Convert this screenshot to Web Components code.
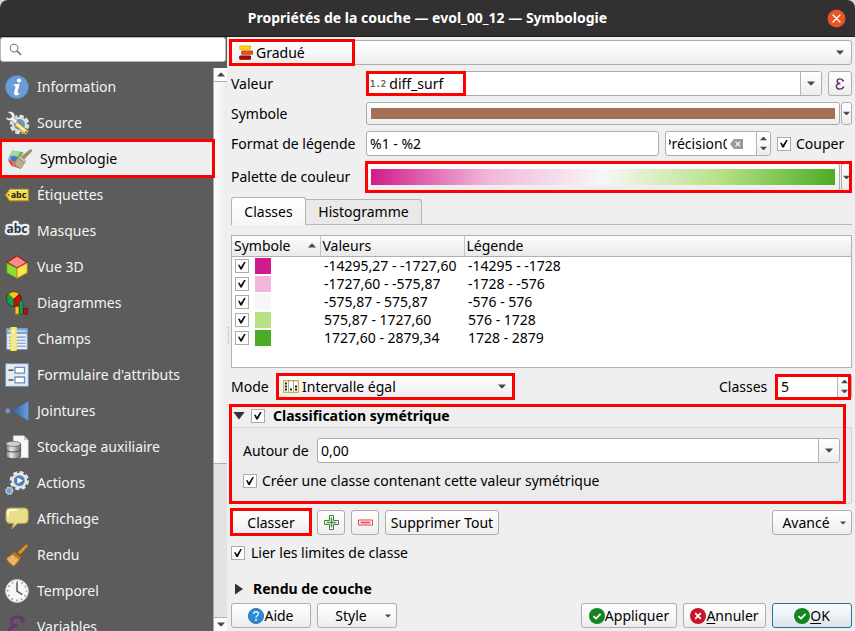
<!DOCTYPE html>
<html lang="fr">
<head>
<meta charset="utf-8">
<title>Propriétés de la couche — evol_00_12 — Symbologie</title>
<style>
  html, body { margin: 0; height: 100%; }
  body { background: #d6d6d6; font: 14px/18px "Noto Sans", "Open Sans", sans-serif; color: #000; overflow: hidden; }
</style>
</head>
<body>
<layer-dialog></layer-dialog>
<script>
const BASE = `
  *, *::before, *::after { box-sizing: border-box; }
  button, input, select { font: inherit; color: inherit; margin: 0; }
  button { cursor: pointer; }
`;
const BTN = 'linear-gradient(#fefefe, #f8f8f8 45%, #ececec)';

const ICONS = {
  search: `<svg viewBox="0 0 14 14"><circle cx="5.5" cy="5.5" r="4.2" fill="none" stroke="#777" stroke-width="1.1"/><path d="M8.8 8.8L12.6 12.4" stroke="#777" stroke-width="1.8" stroke-linecap="round"/></svg>`,
  arrow: `<svg viewBox="0 0 8 5"><path d="M0 .5H8L4.6 4.2H3.4Z" fill="#4a4a4a"/></svg>`,
  arrowUp: `<svg viewBox="0 0 8 5"><path d="M0 4.5H8L4.6 .8H3.4Z" fill="#4a4a4a"/></svg>`,
  close: `<svg viewBox="0 0 19 19"><circle cx="9.5" cy="9.5" r="9" fill="#ea5424"/><path d="M6 6L13 13M13 6L6 13" stroke="#fff" stroke-width="1.4" stroke-linecap="round"/></svg>`,
  info: `<svg viewBox="0 0 24 24"><circle cx="12" cy="12" r="11.6" fill="#6d9bd3" stroke="#4d7fbf" stroke-width=".8"/><circle cx="14" cy="5.6" r="2.1" fill="#fff"/><path d="M8.7 9.4L14.6 8.8L12.6 17.2Q12.3 18.9 15.1 17.4Q13.6 20.5 10.9 20.4Q8.5 20.2 9.2 17.3L10.5 11.6Q10.6 10.5 8.5 10.7Z" fill="#fff"/></svg>`,
  source: `<svg viewBox="0 0 24 24"><circle cx="14.5" cy="13.5" r="8.2" fill="none" stroke="#e4e6e4" stroke-width="3.2" stroke-dasharray="4.2 2.2"/><circle cx="14.5" cy="13.5" r="6.6" fill="#6795cb" stroke="#d8dcdc" stroke-width="2.4"/><path d="M2 1.5Q7-1 9.5 3Q10.3 5 9.5 7L14 11.4L11.2 14L7 9.6Q2.4 10.5.5 7L2 6.5L5 7.5L7 5.5L5.5 2.8Z" fill="#f3f3ef" stroke="#666" stroke-width=".6"/><path d="M12 10.7L23.7 20.2L20.8 23.8L9.6 14.2Z" fill="#f0dc73" stroke="#8e7a28" stroke-width=".8"/><path d="M11.5 12.5L21.5 21" stroke="#fff7ba" stroke-width="1.2"/><circle cx="21" cy="21.2" r="1.1" fill="#8a7431"/></svg>`,
  symbology: `<svg viewBox="0 0 26 22"><path d="M4.5 1.5L13 3L10 8.6L1.8 7Z" fill="#a8d69b"/><path d="M13 3L17 4L13 10L10 8.6Z" fill="#6fb35c"/><path d="M1.8 7L11 8.6L8 13.8L0 12Z" fill="#78a8dc"/><path d="M4 7.5L11 8.6L8 13.8L3 12.6Z" fill="#4479b8"/><path d="M0 12L9 14L11 20.5L4 18.5Z" fill="#c9403c"/><path d="M3 12.6L11 14L8 19.6L5 18.6Z" fill="#e26f6b"/><path d="M24.2.6Q26.3.8 25.4 3L17.6 11L14.6 8.6Z" fill="#a09268" stroke="#7d704b" stroke-width=".6"/><path d="M12.8 7.6L19.6 13.3L18 15.3L10.9 9.6Z" fill="#cfcab4" stroke="#877d5e" stroke-width=".5"/><path d="M10.9 9.6L18 15.3L13.5 21.5Q8.5 20.5 7 16Z" fill="#b9a987" stroke="#7b6d4b" stroke-width=".6"/><path d="M9 15L14 20M11 12.4L16 17.8" stroke="#d8cba9" stroke-width=".6"/></svg>`,
  labels: `<svg viewBox="0 0 24 24"><path d="M.6 12L4.6 6.2H23.3V17.8H4.6Z" fill="#f7d940" stroke="#b8951b" stroke-width="1"/><path d="M5 7.4H22.3" stroke="#fff2a0"/><circle cx="3.6" cy="12" r="1" fill="#8a7010"/><text x="13.6" y="15.2" font-family="Noto Sans, sans-serif" font-size="9" font-weight="700" text-anchor="middle" fill="#222">abc</text></svg>`,
  masks: `<svg viewBox="0 0 24 24"><text x="12" y="14" font-family="Noto Sans, sans-serif" font-size="12" font-weight="700" text-anchor="middle" fill="#33373c" stroke="#e8eefb" stroke-width="4.6" stroke-linejoin="round" paint-order="stroke">abc</text></svg>`,
  cube: `<svg viewBox="0 0 24 26"><path d="M12 .8L23 8L12 14L1 8Z" fill="#f58b8b" stroke="#b5121b" stroke-width="1.3"/><path d="M1 8.6L12 14.6V25.2L1 19.2Z" fill="#8fdc35" stroke="#5b9c17"/><path d="M23 8.6L12 14.6V25.2L23 19.2Z" fill="#fbe44e" stroke="#b99a12"/></svg>`,
  diagrams: `<svg viewBox="0 0 24 26"><circle cx="8.6" cy="8.8" r="8" fill="#12a04b" stroke="#17482c"/><path d="M8.6 8.8L2.6 3.4A8 8 0 0 1 14.6 3.4Z" fill="#f7c518" stroke="#7a5a08" stroke-width=".7"/><path d="M8.6 8.8L14.6 3.4A8 8 0 0 1 9 16.8Z" fill="#c80d12" stroke="#5a090b" stroke-width=".7"/><path d="M10.2 17.2H14V25H10.2Z" fill="#f9cb1d" stroke="#a87f0a" stroke-width=".8"/><path d="M14.8 10.6H18.4V25H14.8Z" fill="#15a454" stroke="#0a5c2c" stroke-width=".8"/><path d="M19.2 18.8H23.3V25H19.2Z" fill="#c41015" stroke="#660708" stroke-width=".8"/></svg>`,
  fields: `<svg viewBox="0 0 24 26"><path d="M.8 1.6H23.2V24.4H.8Z" fill="#e9eef3" stroke="#7198c5"/><path d="M.8 1.6H23.2V7.6H.8Z" fill="#7ba4d2"/><path d="M2 4.4H22" stroke="#bcd4ee" stroke-width="2"/><path d="M3 11H21.5M3 14.3H21.5M3 17.6H21.5M3 20.9H21.5" stroke="#7198c5" stroke-width="1.2"/><path d="M5.6.8H11V25.3H5.6Z" fill="#efe7a8" stroke="#f5ee3c" stroke-width="1.4"/><circle cx="8.3" cy="5" r="1.2" fill="#fff"/></svg>`,
  form: `<svg viewBox="0 0 24 24"><path d="M.6.6H23.4V23.4H.6Z" fill="#e8eaec" stroke="#6d96c6"/><path d="M10 4.4H19.5V10.2H10ZM10 14H19.5V19.8H10Z" fill="#fff" stroke="#6492c9" stroke-width="1.3"/><path d="M3.5 7.3H8.4M3.5 16.9H8.4" stroke="#44546a" stroke-width="1.5"/></svg>`,
  joins: `<svg viewBox="0 0 26 24"><defs><linearGradient id="j"><stop offset="0" stop-color="#2d5f9c"/><stop offset="1" stop-color="#6c9fd8"/></linearGradient></defs><circle cx="3" cy="12" r="2.7" fill="#6c9ace"/><path d="M8 12L25.4 1.2V22.8Z" fill="url(#j)" stroke="#3f70ad" stroke-width=".6"/></svg>`,
  storage: `<svg viewBox="0 0 26 26"><defs><linearGradient id="s"><stop offset="0" stop-color="#707070"/><stop offset=".35" stop-color="#e8e8e8"/><stop offset="1" stop-color="#6a6a6a"/></linearGradient></defs><path d="M9 .8H20.6L25.2 5.6V24.6H9Z" fill="#fafafa" stroke="#c4c4c4" stroke-width=".6"/><path d="M20.6.8V5.6H25.2Z" fill="#c6c6c6"/><path d="M1 9.6V22.8A8 2.8 0 0 0 17 22.8V9.6Z" fill="url(#s)" stroke="#444" stroke-width=".7"/><ellipse cx="9" cy="9.6" rx="8" ry="2.8" fill="#cfcfcf" stroke="#555" stroke-width=".7"/><path d="M1 15.6A8 2.8 0 0 0 17 15.6" fill="none" stroke="#3d3d3d"/></svg>`,
  actions: `<svg viewBox="0 0 26 26"><circle cx="15.5" cy="10.4" r="9" fill="none" stroke="#e3e5e7" stroke-width="3" stroke-dasharray="4.3 2.77"/><circle cx="15.5" cy="10.4" r="7.2" fill="#4f82bd" stroke="#e3e5e7" stroke-width="2.6"/><path d="M13.4 7L19.4 10.4L13.4 13.8Z" fill="#fff"/><circle cx="4.6" cy="21.4" r="3.6" fill="#6f9fd5" stroke="#dfe5ea" stroke-width="1.6" stroke-dasharray="1.9 .93"/></svg>`,
  display: `<svg viewBox="0 0 24 24"><path d="M4.8 1H19.4Q23.2 1 23.2 4.8V12.6Q23.2 16.4 19.4 16.4H12.4L7 21.8L8.6 16.4H4.8Q1 16.4 1 12.6V4.8Q1 1 4.8 1Z" fill="#e9dd8c" stroke="#b5a63f"/><path d="M3 9V5.4Q3 3 5.6 3H12" fill="none" stroke="#fbf8dc" stroke-width="1.8" stroke-linecap="round"/></svg>`,
  render: `<svg viewBox="0 0 24 24"><path d="M21 1.2Q24 .8 23 3.4L15.4 11.8L12.4 9.2Z" fill="#d9932d" stroke="#8a5410" stroke-width=".8"/><path d="M9.4 8.8L16.4 14.6L14.8 16.6L7.6 10.8Z" fill="#c57d22" stroke="#8a5410" stroke-width=".6"/><path d="M7.6 10.8L14.8 16.6L9 23.4Q3.4 20.6 1.2 15.6Z" fill="#eaa552" stroke="#9c6116" stroke-width=".7"/><path d="M3.6 15.8L9.6 20.8M5.6 13.6L11.6 18.8M4.6 18.6L9.4 13.2M7.4 20.8L12 15.4" stroke="#f8d29c" stroke-width=".7"/></svg>`,
  clock: `<svg viewBox="0 0 24 24"><circle cx="12" cy="12" r="11.4" fill="#f6f6f4" stroke="#cfcfcc"/><circle cx="12" cy="12" r="9.4" fill="none" stroke="#5f8fce" stroke-width="1.6" stroke-dasharray="1.3 3.62" stroke-dashoffset=".6"/><path d="M12 3.4V12.2L17.2 15.6" fill="none" stroke="#555" stroke-width="1.5"/></svg>`,
  epsilon: `<svg viewBox="0 0 18 22"><path d="M15 5.4Q13.6 1.6 9 1.6Q4 1.6 3.6 5.6Q3.6 9.8 9.6 10Q2 10.4 2.2 15.4Q2.6 20.4 8.6 20.4Q14.4 20.2 16 15.6" fill="none" stroke="#67376f" stroke-width="2.6"/><circle cx="14.2" cy="5" r="2" fill="#67376f"/></svg>`,
  graduated: `<svg viewBox="0 0 14 15"><path d="M.8 1H11.4V4.2H.8Z" fill="#fedc0b" stroke="#f4a814"/><path d="M2.8 6H13.4V9.2H2.8Z" fill="#f5560f" stroke="#c83c00"/><path d="M.8 11H11.4V14.2H.8Z" fill="#b60f0b" stroke="#6e0502"/></svg>`,
  interval: `<svg viewBox="0 0 16 14"><path d="M.7 1.2H15.3V12.8H.7Z" fill="#fff" stroke="#c9b42c" stroke-width="1.2"/><path d="M5.5 1V13M10.5 1V13" stroke="#555" stroke-width="1" stroke-dasharray="1 1"/><path d="M2 3H4V5H2ZM2 6H4V8H2ZM2 9H4V11H2ZM7 9H9V11H7ZM12 6H14V8H12ZM12 9H14V11H12Z" fill="#222"/></svg>`,
  clear: `<svg viewBox="0 0 13 10"><path d="M0 5L4 0H13V10H4Z" fill="#999"/><path d="M5.5 2.7L10 7.3M10 2.7L5.5 7.3" stroke="#fff" stroke-width="1.1"/></svg>`,
  plus: `<svg viewBox="0 0 15 15"><path d="M5.5 .5H9.5V5.5H14.5V9.5H9.5V14.5H5.5V9.5H.5V5.5H5.5Z" fill="#fff" stroke="#3e7c3a" stroke-width="1"/><path d="M7.5 2.5V12.5M2.5 7.5H12.5" stroke="#4e8f49" stroke-width="1.6"/></svg>`,
  minus: `<svg viewBox="0 0 15 15"><path d="M.5 5H14.5V10H.5Z" fill="#fff" stroke="#e23f48" stroke-width="1"/><path d="M2.5 7.5H12.5" stroke="#ee5a60" stroke-width="2"/></svg>`,
  help: `<svg viewBox="0 0 16 16"><circle cx="8" cy="8" r="7.6" fill="#2d8ad6" stroke="#1e66a6" stroke-width=".8"/><path d="M5.6 6Q5.6 3.6 8 3.6Q10.5 3.7 10.4 5.8Q10.3 7.2 8.8 8Q8 8.5 8 9.8" fill="none" stroke="#fff" stroke-width="1.2"/><circle cx="8" cy="12" r=".9" fill="#fff"/></svg>`,
  ok: `<svg viewBox="0 0 16 16"><circle cx="8" cy="8" r="8" fill="#148423"/><path d="M4.4 8.2L7 10.6L11.6 5.8" fill="none" stroke="#fff" stroke-width="1.7"/></svg>`,
  cancel: `<svg viewBox="0 0 16 16"><circle cx="8" cy="8" r="8" fill="#c7162b"/><path d="M5.2 5.2L10.8 10.8M10.8 5.2L5.2 10.8" stroke="#fff" stroke-width="1.7"/></svg>`
};

function define(name, css, html, setup) {
  customElements.define(name, class extends HTMLElement {
    connectedCallback() {
      if (this.shadowRoot) return;
      const root = this.attachShadow({ mode: 'open' });
      const t = document.createElement('template');
      t.innerHTML = `<style>${BASE}${css}</style>` + (typeof html === 'function' ? html(this) : html);
      root.append(t.content.cloneNode(true));
      if (setup) setup(this, root);
    }
  });
}

define('ui-icon', `
  :host { display: inline-block; flex: none; width: 16px; height: 16px; }
  svg { display: block; width: 100%; height: 100%; overflow: visible; }
`, el => ICONS[el.getAttribute('name')]);

/* Red frame drawn over the slotted content. */
define('ui-mark', `
  :host { display: grid; position: relative; min-width: 0; }
  :host::after { content: ""; position: absolute; inset: var(--inset, 0); width: var(--mark-width, auto);
    border: 3px solid #fe0000; pointer-events: none; z-index: 2; }
`, `<slot></slot>`);

define('ui-button', `
  :host { display: inline-flex; min-width: var(--min, 80px); height: 25px; }
  button { flex: 1; display: flex; align-items: center; justify-content: center; position: relative;
    padding: 0 var(--end, 4px) 0 4px; border: 1px solid #adadad; border-radius: 3px; background: ${BTN}; white-space: nowrap; }
  :host([primary]) button { border-color: #2a6f9e; background: linear-gradient(#fbfcfd, #eef2f6 50%, #d9e2ea); }
  .drop { position: absolute; right: 5px; top: 10px; width: 6px; height: 4px; }
`, el => `<button type="button" aria-label="${el.getAttribute('label') || ''}"><slot></slot>${el.hasAttribute('menu') ? '<ui-icon class="drop" name="arrow"></ui-icon>' : ''}</button>`,
(el, root) => { if (!el.hasAttribute('label')) root.querySelector('button').removeAttribute('aria-label'); });

define('ui-check', `
  :host { display: inline-flex; }
  label { display: flex; align-items: center; gap: var(--gap, 5px); white-space: nowrap; }
  input { appearance: none; flex: none; display: grid; place-items: center; width: 14px; height: 14px; border: 1px solid #acacac; background: #fff; }
  input:checked::before { content: ""; width: 8px; height: 8px; background: #111;
    clip-path: polygon(0 40%, 22% 40%, 36% 68%, 80% 0, 100% 0, 48% 100%, 28% 100%); }
`, el => `<label><input type="checkbox" checked${el.hasAttribute('name') ? ` aria-label="${el.getAttribute('name')}"` : ''}><slot></slot></label>`);

const FIELD = `
  :host { display: grid; grid-template-columns: var(--label, auto) minmax(0, 1fr); gap: 6px; align-items: center; min-width: 0; }
  :host([bare]) { grid-template-columns: minmax(0, 1fr); }
  label { white-space: nowrap; }
  .box { display: flex; position: relative; height: 25px; border: 1px solid #adadad; border-radius: 3px; background: #fff; overflow: hidden; }
  .side { flex: none; display: grid; place-items: center; padding: 0; border: 0; border-left: 1px solid #b4b4b4; background: ${BTN}; }
  input { flex: 1; min-width: 0; border: 0; background: none; padding: 0 3px; outline-offset: -1px; }
`;
const labelOf = el => el.hasAttribute('bare') ? '' : `<label for="c">${el.getAttribute('label')}</label>`;
const nameOf = el => el.hasAttribute('bare') ? `aria-label="${el.getAttribute('label')}"` : '';

define('ui-select', FIELD + `
  .box { background: ${BTN}; align-items: center; }
  select { appearance: none; flex: 1; align-self: stretch; border: 0; background: none; padding: 0 24px; outline-offset: -1px; }
  ui-icon { position: absolute; pointer-events: none; }
  .lead { left: var(--lead-left, 7px); width: var(--lead, 14px); height: 15px; }
  .arrow { right: 7px; width: 8px; height: 5px; }
`, el => `${labelOf(el)}<div class="box"><ui-icon class="lead" name="${el.getAttribute('icon')}"></ui-icon>
  <select id="c" ${nameOf(el)}><option>${el.getAttribute('value')}</option></select><ui-icon class="arrow" name="arrow"></ui-icon></div>`);

define('ui-edit', FIELD + `
  .type { align-self: center; padding-left: 3px; font: 700 9px/12px "DejaVu Sans Mono", monospace; color: #666; }
  .side { width: 21px; }
  .side ui-icon { width: 8px; height: 5px; }
`, el => `${labelOf(el)}<div class="box">${el.hasAttribute('type') ? `<span class="type">${el.getAttribute('type')}</span>` : ''}
  <input id="c" type="text" ${nameOf(el)} value="${el.getAttribute('value')}">
  ${el.hasAttribute('combo') ? '<button class="side" type="button" aria-label="Dérouler"><ui-icon name="arrow"></ui-icon></button>' : ''}</div>`);

define('ui-spin', FIELD + `
  input { text-indent: var(--scroll, 0); }
  .clear { flex: none; width: 26px; display: grid; place-items: center start; padding: 0; border: 0; background: none; }
  .clear ui-icon { width: 13px; height: 10px; }
  .steps { flex: none; display: grid; width: 14px; padding: 1px 0; border-left: 1px solid #b4b4b4; background: ${BTN}; }
  .steps button { display: grid; place-items: center; padding: 0; border: 0; background: none; }
  .steps ui-icon { width: 7px; height: 5px; }
`, el => `${labelOf(el)}<div class="box"><input id="c" type="text" ${nameOf(el)} value="${el.getAttribute('value')}">
  ${el.hasAttribute('clearable') ? '<button class="clear" type="button" aria-label="Effacer"><ui-icon name="clear"></ui-icon></button>' : ''}
  <div class="steps"><button type="button" aria-label="Augmenter"><ui-icon name="arrowUp"></ui-icon></button><button type="button" aria-label="Diminuer"><ui-icon name="arrow"></ui-icon></button></div></div>`);

define('ui-swatch', `
  :host { display: grid; grid-template-columns: var(--label) minmax(0, 1fr) 12px; align-items: center; }
  label { white-space: nowrap; }
  button { height: var(--h, 23px); border: 1px solid #adadad; border-radius: 3px; background: ${BTN}; }
  #c { margin-left: 6px; padding: 5px 4px; }
  #c span { display: block; height: 100%; background: var(--fill); }
  .drop { display: grid; place-items: center; margin-left: 1px; padding: 0; overflow: hidden; }
  .drop ui-icon { width: 7px; height: 5px; }
`, el => `<label for="c">${el.getAttribute('label')}</label><button id="c" type="button"><span></span></button>
  <button class="drop" type="button" aria-label="Options"><ui-icon name="arrow"></ui-icon></button>`);

define('ui-tabs', `
  :host { display: flex; align-items: flex-end; height: 28px; border-bottom: 1px solid #b9b9b9; }
  button { height: 25px; padding: 0 10px; border: 1px solid #b4b4b4; border-bottom: 0; border-left: 0; border-radius: 0 3px 0 0; background: #e9e9e9; min-width: 116px; }
  button[aria-selected=true] { position: relative; height: 28px; margin-bottom: -1px; min-width: 75px; border-left: 1px solid #b4b4b4; border-radius: 3px 3px 0 0; background: linear-gradient(#fff, #f6f6f6); }
`, `<button type="button" role="tab" aria-selected="true">Classes</button><button type="button" role="tab" aria-selected="false">Histogramme</button>`,
el => el.setAttribute('role', 'tablist'));

define('class-table', `
  :host { display: block; min-height: 112px; overflow: hidden; border: 1px solid #b0b0b0; background: #fff; }
  table { width: 100%; border-collapse: collapse; table-layout: fixed; }
  .a { width: 88px; } .b { width: 144px; }
  thead { background: linear-gradient(#fdfdfd, #f3f3f3 50%, #e9e9e9); }
  th { height: 20px; padding: 0 2px; border-bottom: 1px solid #b0b0b0; font-weight: 400; text-align: left; }
  th + th { border-left: 1px solid #c4c4c4; }
  td { height: 18px; padding: 0 4px; white-space: nowrap; }
  td:first-child { padding: 0 3px; }
  .sort, .key { display: flex; align-items: center; justify-content: space-between; }
  .key { justify-content: flex-start; gap: 6px; }
  .sort ui-icon { width: 8px; height: 5px; margin-right: 2px; }
  i { width: 16px; height: 16px; }
`, () => {
  const rows = [
    ['#d01c8b', '-14295,27 - -1727,60', '-14295 - -1728'],
    ['#f1b6da', '-1727,60 - -575,87', '-1728 - -576'],
    ['#f7f7f7', '-575,87 - 575,87', '-576 - 576'],
    ['#b8e186', '575,87 - 1727,60', '576 - 1728'],
    ['#4dac26', '1727,60 - 2879,34', '1728 - 2879']];
  return `<table><colgroup><col class="a"><col class="b"><col></colgroup>
    <thead><tr><th><div class="sort">Symbole<ui-icon name="arrowUp"></ui-icon></div></th><th>Valeurs</th><th>Légende</th></tr></thead>
    <tbody>${rows.map(([c, v, l]) => `<tr><td><div class="key"><ui-check name="${l}"></ui-check><i style="background:${c}"></i></div></td><td>${v}</td><td>${l}</td></tr>`).join('')}</tbody></table>`;
});

define('nav-item', `
  :host { display: block; }
  a { display: flex; align-items: center; gap: 8px; height: 36px; padding-left: 5px; color: #f4f4f4; text-decoration: none; white-space: nowrap; }
  ui-icon { width: 24px; height: 24px; }
  :host([current]) a { padding-left: 8px; background: #efefef; color: #000; }
`, el => `<a href="#${el.getAttribute('icon')}"${el.hasAttribute('current') ? ' aria-current="page"' : ''}><ui-icon name="${el.getAttribute('icon')}"></ui-icon><slot></slot></a>`);

define('side-nav', `
  :host { display: grid; grid-template: auto minmax(0, 1fr) / minmax(0, 1fr); background: #5c5c5c; min-height: 0; }
  .search { display: flex; align-items: center; height: 25px; margin: 0 1px 6px 0; padding-left: 8px; gap: 4px; border: 1px solid #b8b8b8; border-radius: 3px; background: #fff; }
  .search ui-icon { width: 13px; height: 13px; }
  .search input { flex: 1; min-width: 0; border: 0; padding: 0; background: none; outline: 0; }
  .list { display: grid; grid-template-columns: minmax(0, 1fr) 14px; min-height: 0; }
  nav { padding-top: 1px; min-height: 0; overflow: clip; overflow-clip-margin: 2px; }
  ui-mark { --inset: -2px -2px -1px -1px; }
  .bar { display: grid; grid-template-rows: 14px minmax(0, 382fr) minmax(0, 153fr) 14px; border-left: 1px solid #aaa; background: #e3e3e3; }
  .bar button { display: grid; place-items: center; padding: 0; border: 0; background: #fbfbfb; }
  .bar button:first-child { border-bottom: 1px solid #b0b0b0; }
  .bar button:last-child { border-top: 1px solid #b0b0b0; }
  .bar ui-icon { width: 8px; height: 5px; }
  .thumb { border-bottom: 1px solid #b0b0b0; background: linear-gradient(90deg, #fdfdfd, #ececec); }
`, `
  <div class="search"><ui-icon name="search"></ui-icon><input type="search" aria-label="Rechercher"></div>
  <div class="list"><nav>
    <nav-item icon="info">Information</nav-item>
    <nav-item icon="source">Source</nav-item>
    <ui-mark><nav-item icon="symbology" current>Symbologie</nav-item></ui-mark>
    <nav-item icon="labels">Étiquettes</nav-item>
    <nav-item icon="masks">Masques</nav-item>
    <nav-item icon="cube">Vue 3D</nav-item>
    <nav-item icon="diagrams">Diagrammes</nav-item>
    <nav-item icon="fields">Champs</nav-item>
    <nav-item icon="form">Formulaire d'attributs</nav-item>
    <nav-item icon="joins">Jointures</nav-item>
    <nav-item icon="storage">Stockage auxiliaire</nav-item>
    <nav-item icon="actions">Actions</nav-item>
    <nav-item icon="display">Affichage</nav-item>
    <nav-item icon="render">Rendu</nav-item>
    <nav-item icon="clock">Temporel</nav-item>
    <nav-item icon="epsilon">Variables</nav-item>
  </nav>
  <div class="bar"><button type="button" aria-label="Défiler vers le haut"><ui-icon name="arrowUp"></ui-icon></button><div class="thumb"></div><div></div><button type="button" aria-label="Défiler vers le bas"><ui-icon name="arrow"></ui-icon></button></div></div>
`);

define('symmetric-group', `
  :host { display: block; }
  header { display: flex; align-items: center; gap: 6px; height: 23px; padding-left: 2px; font-weight: 700; }
  header button { width: 12px; height: 8px; padding: 0; border: 0; background: #333; clip-path: polygon(0 0, 100% 0, 50% 100%); }
  header ui-check { --gap: 8px; }
  .body { --label: 68px; display: grid; gap: 9px; padding: 10px 11px 13px; border: 1px solid #d4d4d4; border-radius: 2px; background: #ebebeb; }
`, `
  <header><button type="button" aria-label="Replier"></button><ui-check>Classification symétrique</ui-check></header>
  <div class="body">
    <ui-edit label="Autour de" value="0,00" combo></ui-edit>
    <ui-check>Créer une classe contenant cette valeur symétrique</ui-check>
  </div>
`);

define('symbology-pane', `
  :host { position: relative; display: flex; flex-direction: column; gap: 6px; min-width: 0; min-height: 0; padding: 3px 3px 3px 4px; background: #efefef; --label: 129px; }
  :host::before { content: ""; position: absolute; left: 1px; top: 290px; height: 17px; border-left: 1px dotted #aaa; }
  .row { display: flex; align-items: center; gap: 6px; }
  .grow { flex: 1; min-width: 0; }
  .gradue { --inset: -1px auto -1px -2px; --mark-width: 126px; }
  .valeur { --inset: 0 auto 0 135px; --mark-width: 100px; }
  .symbole { --fill: #a57058; }
  .palette { --inset: -2px 0 -2px 134px; margin-top: 1px; }
  .palette ui-swatch { --h: 28px; --fill: linear-gradient(90deg, #d01c8b, #f1b6da 25%, #f7f7f7 50%, #b8e186 75%, #4dac26); }
  .precision { width: 106px; --scroll: -6px; }
  .e { --min: 24px; } .e ui-icon { width: 10px; height: 12px; }
  class-table { flex: 1; margin-top: 4px; }
  .mode { --label: 40px; --lead: 16px; --lead-left: 5px; --inset: -1px -1px -1px 45px; width: 283px; }
  .classes { --label: 52px; --inset: 0 1px -1px 56px; width: 133px; margin-left: auto; }
  .group { --inset: 0 6px 0 -2px; margin-top: -1px; }
  .classer { --inset: -2px -1px -1px -1px; }
  .sq { --min: 28px; } .sq ui-icon { width: 15px; height: 15px; }
  .end { margin-left: auto; }
  details { font-weight: 700; margin: 11px 0 -2px; }
  summary { display: flex; align-items: center; gap: 10px; padding-left: 4px; height: 20px; list-style: none; }
  summary::before { content: ""; width: 8px; height: 11px; background: #333; clip-path: polygon(0 0, 100% 50%, 0 100%); }
  .lier { margin-top: 3px; --gap: 6px; }
  u { text-underline-offset: 2px; }
`, `
  <ui-mark class="gradue"><ui-select bare label="Type de symbologie" icon="graduated" value="Gradué"></ui-select></ui-mark>
  <div class="row">
    <ui-mark class="valeur grow"><ui-edit label="Valeur" type="1.2" value="diff_surf" combo></ui-edit></ui-mark>
    <ui-button class="e" label="Expression"><ui-icon name="epsilon"></ui-icon></ui-button>
  </div>
  <ui-swatch class="symbole" label="Symbole"></ui-swatch>
  <div class="row">
    <ui-edit class="grow" label="Format de légende" value="%1 - %2"></ui-edit>
    <ui-spin class="precision" bare label="Précision" value="Précision0" clearable></ui-spin>
    <ui-check style="width:75px">Couper</ui-check>
  </div>
  <ui-mark class="palette"><ui-swatch label="Palette de couleur"></ui-swatch></ui-mark>
  <ui-tabs></ui-tabs>
  <class-table></class-table>
  <div class="row">
    <ui-mark class="mode"><ui-select label="Mode" icon="interval" value="Intervalle égal"></ui-select></ui-mark>
    <ui-mark class="classes"><ui-spin label="Classes" value="5"></ui-spin></ui-mark>
  </div>
  <ui-mark class="group"><symmetric-group></symmetric-group></ui-mark>
  <div class="row">
    <ui-mark class="classer"><ui-button>Classer</ui-button></ui-mark>
    <ui-button class="sq" label="Ajouter une classe"><ui-icon name="plus"></ui-icon></ui-button>
    <ui-button class="sq" label="Supprimer la classe"><ui-icon name="minus"></ui-icon></ui-button>
    <ui-button style="--min:114px">Supprimer Tout</ui-button>
    <ui-button class="end" menu style="--end:16px">Avancé</ui-button>
  </div>
  <ui-check class="lier">Lier les limites de classe</ui-check>
  <details><summary>Rendu de couche</summary></details>
  <div class="row">
    <ui-button><ui-icon name="help"></ui-icon>Aide</ui-button>
    <ui-button menu style="--end:16px">Style</ui-button>
    <ui-button class="end" style="--min:96px"><ui-icon name="ok"></ui-icon>Appliquer</ui-button>
    <ui-button style="--min:83px"><ui-icon name="cancel"></ui-icon><u>A</u>nnuler</ui-button>
    <ui-button primary><ui-icon name="ok"></ui-icon><u>O</u>K</ui-button>
  </div>
`);

define('layer-dialog', `
  :host { display: grid; grid-template: 37px minmax(0, 1fr) / 227px minmax(0, 1fr); height: 100vh; }
  header { grid-column: 1 / -1; display: grid; grid-template-columns: 1fr auto 1fr; align-items: center; border-radius: 8px 8px 0 0;
    background: #323031; border-bottom: 1px solid #1e1d1d; color: #fff; }
  h1 { grid-column: 2; margin: 0; font: 700 14px/20px "Noto Sans", sans-serif; }
  button { justify-self: end; margin-right: 9px; padding: 0; border: 0; background: none; display: flex; }
  ui-icon { width: 19px; height: 19px; }
`, `
  <header><h1>Propriétés de la couche — evol_00_12 — Symbologie</h1><button type="button" aria-label="Fermer"><ui-icon name="close"></ui-icon></button></header>
  <side-nav></side-nav>
  <symbology-pane></symbology-pane>
`);
</script>
</body>
</html>
